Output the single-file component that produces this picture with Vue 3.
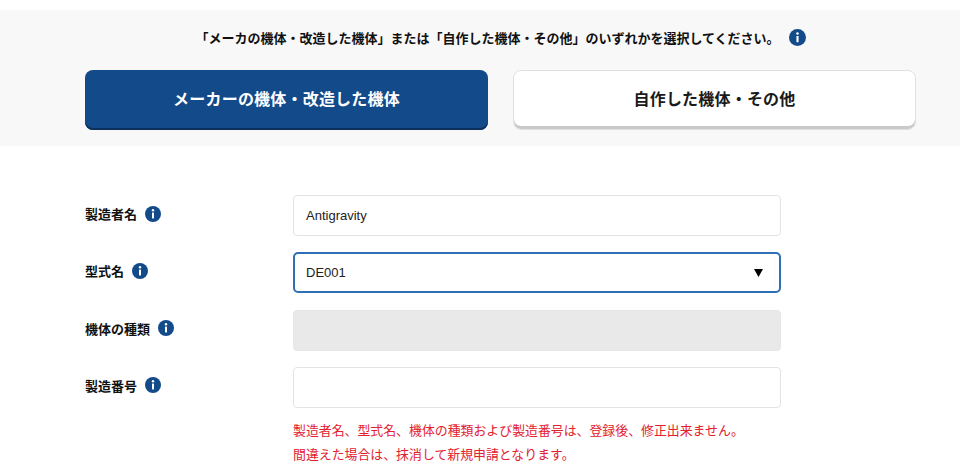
<script setup>
const rows = [
  { label: '製造者名', kind: 'text', value: 'Antigravity' },
  { label: '型式名', kind: 'select', value: 'DE001' },
  { label: '機体の種類', kind: 'disabled', value: '' },
  { label: '製造番号', kind: 'text', value: '' },
]
</script>

<template>
  <div class="page">
    <section class="band">
      <p class="lead">
        <span>「メーカの機体・改造した機体」または「自作した機体・その他」のいずれかを選択してください。</span>
        <svg class="info lead-info" viewBox="0 0 16 16" aria-hidden="true">
          <circle cx="8" cy="8" r="8" fill="#134a8a" />
          <circle cx="8" cy="4.3" r="1.2" fill="#fff" />
          <rect x="7" y="6.6" width="2" height="5.8" rx=".4" fill="#fff" />
        </svg>
      </p>
      <div class="choices">
        <button class="choice active" type="button">メーカーの機体・改造した機体</button>
        <button class="choice" type="button">自作した機体・その他</button>
      </div>
    </section>

    <form class="form">
      <div v-for="row in rows" :key="row.label" class="row">
        <div class="label">
          <span>{{ row.label }}</span>
          <svg class="info" viewBox="0 0 16 16" aria-hidden="true">
            <circle cx="8" cy="8" r="8" fill="#134a8a" />
            <circle cx="8" cy="4.3" r="1.2" fill="#fff" />
            <rect x="7" y="6.6" width="2" height="5.8" rx=".4" fill="#fff" />
          </svg>
        </div>
        <div class="field" :class="row.kind">
          <span>{{ row.value }}</span>
          <svg v-if="row.kind === 'select'" class="caret" viewBox="0 0 9 8" aria-hidden="true">
            <path d="M0 0H9L4.5 8Z" fill="#000" />
          </svg>
        </div>
      </div>
      <p class="note">製造者名、型式名、機体の種類および製造番号は、登録後、修正出来ません。<br />間違えた場合は、抹消して新規申請となります。</p>
    </form>
  </div>
</template>

<style>
html, body { margin: 0; background: #fff; overflow: hidden; }
</style>

<style scoped>
.page {
  width: 960px;
  height: 464px;
  overflow: hidden;
  padding-top: 10px;
  box-sizing: border-box;
  font-family: "Liberation Sans", "Noto Sans CJK JP", sans-serif;
  color: #111;
}
.band {
  height: 136px;
  box-sizing: border-box;
  background: #f8f8f8;
  padding: 17px 44px 0 85px;
}
.lead {
  margin: 0;
  height: 20px;
  display: flex;
  align-items: center;
  justify-content: center;
  gap: 9px;
  font-size: 13px;
  font-weight: 700;
}
.info { width: 16px; height: 16px; flex: none; }
.lead-info { width: 17px; height: 17px; }
.choices {
  display: flex;
  gap: 25px;
  margin-top: 23px;
}
.choice {
  width: 403px;
  height: 60px;
  box-sizing: border-box;
  border-radius: 8px;
  font: 700 16px "Liberation Sans", "Noto Sans CJK JP", sans-serif;
  letter-spacing: .2px;
  padding: 0 0 5px;
  background: #fff;
  color: #1a1a1a;
  border: 1px solid #e0e0e0;
  box-shadow: inset 0 -3px 0 #c9c9c9;
}
.choice.active {
  background: #134a8a;
  color: #fff;
  border: none;
  box-shadow: inset 0 -2px 0 #0c2f5c;
}
.form {
  padding: 49px 0 0 85px;
}
.row {
  display: flex;
  align-items: center;
  height: 41px;
  margin-bottom: 16.33px;
}
.label {
  width: 208px;
  display: flex;
  align-items: center;
  gap: 8px;
  font-size: 13px;
  font-weight: 700;
  height: 16px;
  margin-top: -4px;
}
.field {
  width: 488px;
  height: 41px;
  box-sizing: border-box;
  display: flex;
  align-items: center;
  justify-content: space-between;
  padding: 0 17px 0 12px;
  border: 1px solid #e3e3e3;
  border-radius: 4px;
  font-size: 13px;
  color: #222;
  background: #fff;
}
.field.select {
  border: 2px solid #2f6fb5;
  border-radius: 5px;
  padding: 0 16px 0 11px;
}
.field.disabled {
  background: #e9e9e9;
  border-color: #e6e6e6;
}
.caret { width: 9px; height: 8px; }
.note {
  margin: -5px 0 0 208px;
  font-size: 12.9px;
  line-height: 24px;
  color: #e2212f;
}
</style>
